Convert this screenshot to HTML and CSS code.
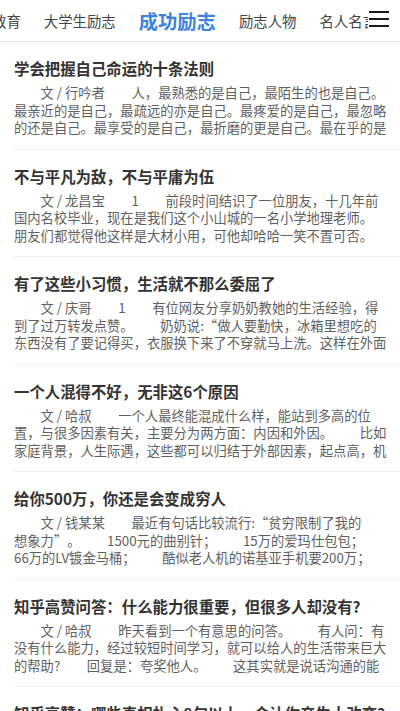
FILE: index.html
```html
<!DOCTYPE html>
<html lang="zh-CN">
<head>
<meta charset="utf-8">
<meta name="viewport" content="width=device-width, initial-scale=1">
<title>成功励志</title>
<link rel="stylesheet" href="styles.css">
</head>
<body>
<header class="nav">
  <nav class="tabs">
    <a class="tab">教育</a>
    <a class="tab">大学生励志</a>
    <a class="tab active">成功励志</a>
    <a class="tab">励志人物</a>
    <a class="tab">名人名言</a>
  </nav>
  <button class="menu" aria-label="菜单"><span></span><span></span><span></span></button>
</header>
<main class="list">
  <article class="item">
    <h2 class="title">学会把握自己命运的十条法则</h2>
    <p class="summary">文 / 行吟者&emsp;&emsp;人，最熟悉的是自己，最陌生的也是自己。最亲近的是自己，最疏远的亦是自己。最疼爱的是自己，最忽略的还是自己。最享受的是自己，最折磨的更是自己。最在乎的是自己，最忽视的也是自己。</p>
  </article>
  <article class="item">
    <h2 class="title">不与平凡为敌，不与平庸为伍</h2>
    <p class="summary">文 / 龙昌宝&emsp;&emsp;1&emsp;&emsp;前段时间结识了一位朋友，十几年前国内名校毕业，现在是我们这个小山城的一名小学地理老师。<br>朋友们都觉得他这样是大材小用，可他却哈哈一笑不置可否。</p>
  </article>
  <article class="item">
    <h2 class="title">有了这些小习惯，生活就不那么委屈了</h2>
    <p class="summary">文 / 庆哥&emsp;&emsp;1&emsp;&emsp;有位网友分享奶奶教她的生活经验，得到了过万转发点赞。&emsp;&emsp;奶奶说:“做人要勤快，冰箱里想吃的东西没有了要记得买，衣服换下来了不穿就马上洗。这样在外面遇到什么事情，回家都能好好休息。</p>
  </article>
  <article class="item">
    <h2 class="title">一个人混得不好，无非这6个原因</h2>
    <p class="summary">文 / 哈叔&emsp;&emsp;一个人最终能混成什么样，能站到多高的位置，与很多因素有关，主要分为两方面：内因和外因。&emsp;&emsp;比如家庭背景，人生际遇，这些都可以归结于外部因素，起点高，机会多。</p>
  </article>
  <article class="item">
    <h2 class="title">给你500万，你还是会变成穷人</h2>
    <p class="summary">文 / 钱某某&emsp;&emsp;最近有句话比较流行:“贫穷限制了我的<span class="word">想象力</span>”。&emsp;&emsp;1500元的曲别针；&emsp;&emsp;15万的爱玛仕包包；<span class="word">66万</span>的LV镀金马桶；&emsp;&emsp;酷似老人机的诺基亚手机要200万；</p>
  </article>
  <article class="item">
    <h2 class="title">知乎高赞问答：什么能力很重要，但很多人却没有?</h2>
    <p class="summary">文 / 哈叔&emsp;&emsp;昨天看到一个有意思的问答。&emsp;&emsp;有人问：有没有什么能力，经过较短时间学习，就可以给人的生活带来巨大的帮助?&emsp;&emsp;回复是：夸奖他人。&emsp;&emsp;这其实就是说话沟通的能力。</p>
  </article>
  <article class="item">
    <h2 class="title">知乎高赞：哪些真相扎心8句以上，会让你产生大改变?</h2>
    <p class="summary">文 / 哈叔&emsp;&emsp;有人问：哪些道理明白得越早越好？</p>
  </article>
</main>
</body>
</html>
```
FILE: styles.css
```css
* {
  box-sizing: border-box;
}

html, body {
  margin: 0;
  padding: 0;
  background: #fff;
}

body {
  font-family: "Noto Sans CJK SC", Roboto, sans-serif;
  color: #333;
  overflow: hidden;
}

.nav {
  position: relative;
  height: 42px;
  border-bottom: 1px solid #e6e6e6;
  overflow: hidden;
}

.tabs {
  display: flex;
  align-items: center;
  gap: 23px;
  height: 41px;
  margin-left: -8px;
  white-space: nowrap;
}

.tab {
  font-size: 14.4px;
  color: #444;
  line-height: 20px;
  flex: none;
}

.tab.active {
  font-size: 19.3px;
  font-weight: 700;
  color: #3d82dc;
}

.menu {
  position: absolute;
  top: 0;
  right: 0;
  width: 32px;
  height: 38px;
  padding: 0 11px 0 1px;
  border: 0;
  background: #fff;
  display: flex;
  flex-direction: column;
  justify-content: center;
  gap: 5px;
}

.menu span {
  display: block;
  width: 20px;
  height: 2px;
  background: #1a1a1a;
}

.list {
  margin: 0;
}

.item {
  margin-left: 14px;
  padding: 16px 13px 12px 0;
  border-bottom: 1px solid #eeeeee;
}

.title {
  margin: 0;
  font-size: 15.4px;
  line-height: 20px;
  font-weight: 700;
  color: #333;
  white-space: nowrap;
  overflow: hidden;
}

.summary {
  margin: 6px 0 0;
  font-size: 13.3px;
  line-height: 17.5px;
  color: #5f5f5f;
  text-indent: 2em;
  overflow: hidden;
  height: 52.5px;
  text-spacing-trim: space-all;
}

.word {
  white-space: nowrap;
}
```
